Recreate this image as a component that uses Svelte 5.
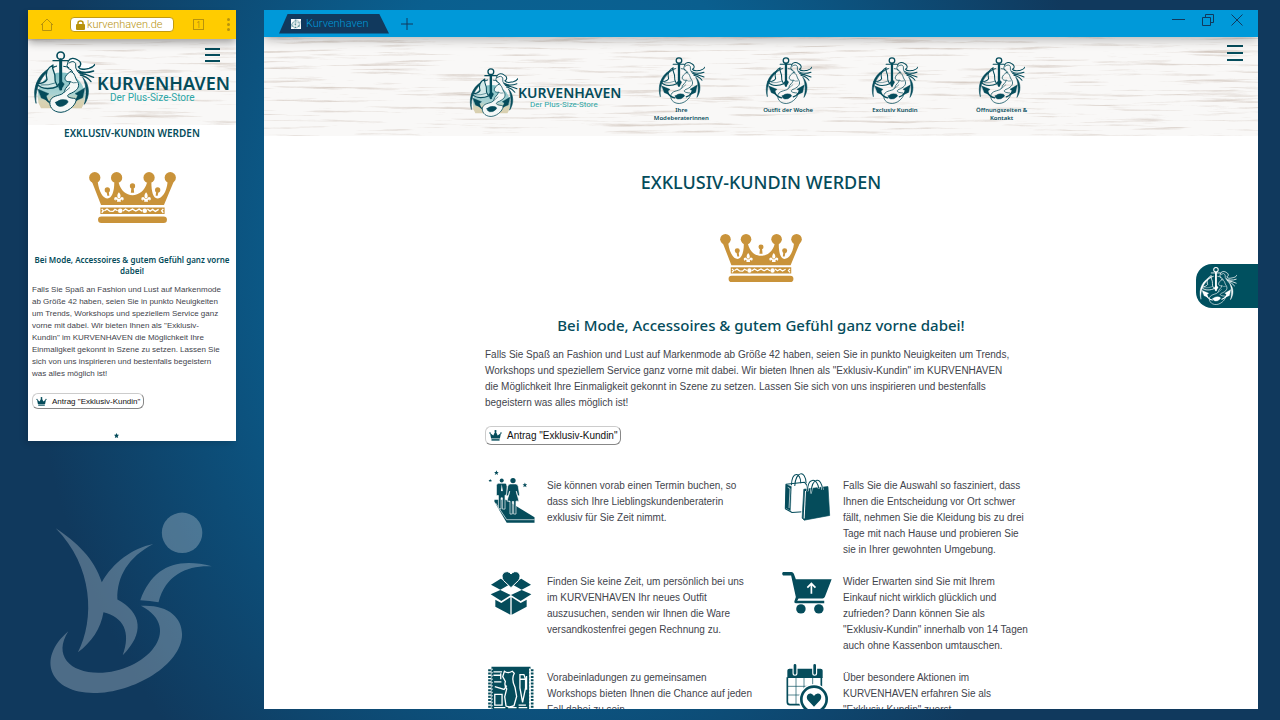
<script>
  const intro =
    'Falls Sie Spaß an Fashion und Lust auf Markenmode ab Größe 42 haben, seien Sie in punkto Neuigkeiten um Trends, Workshops und speziellem Service ganz vorne mit dabei. Wir bieten Ihnen als "Exklusiv-Kundin" im KURVENHAVEN die Möglichkeit Ihre Einmaligkeit gekonnt in Szene zu setzen. Lassen Sie sich von uns inspirieren und bestenfalls begeistern was alles möglich ist!';

  const nav = ['Ihre Modeberaterinnen', 'Outfit der Woche', 'Exclusiv Kundin', 'Öffnungszeiten & Kontakt'];

  const features = [
    { icon: 'carpet', text: 'Sie können vorab einen Termin buchen, so dass sich Ihre Lieblingskundenberaterin exklusiv für Sie Zeit nimmt.' },
    { icon: 'bags', text: 'Falls Sie die Auswahl so fasziniert, dass Ihnen die Entscheidung vor Ort schwer fällt, nehmen Sie die Kleidung bis zu drei Tage mit nach Hause und probieren Sie sie in Ihrer gewohnten Umgebung.' },
    { icon: 'box', text: 'Finden Sie keine Zeit, um persönlich bei uns im KURVENHAVEN Ihr neues Outfit auszusuchen, senden wir Ihnen die Ware versandkostenfrei gegen Rechnung zu.' },
    { icon: 'cart', text: 'Wider Erwarten sind Sie mit Ihrem Einkauf nicht wirklich glücklich und zufrieden? Dann können Sie als "Exklusiv-Kundin" innerhalb von 14 Tagen auch ohne Kassenbon umtauschen.' },
    { icon: 'sewing', text: 'Vorabeinladungen zu gemeinsamen Workshops bieten Ihnen die Chance auf jeden Fall dabei zu sein.' },
    { icon: 'calendar', text: 'Über besondere Aktionen im KURVENHAVEN erfahren Sie als "Exklusiv-Kundin" zuerst.' }
  ];
</script>

{#snippet mermaid(id, colored)}
  <svg class="mermaid" viewBox="0 0 186 186" aria-hidden="true" fill="none" stroke="currentColor" stroke-linecap="round" stroke-linejoin="round">
    {#if colored}
      <defs>
        <linearGradient id={id} x1="0" y1="0" x2="0" y2="1">
          <stop offset="0" stop-color="#7fbfc4" />
          <stop offset="0.6" stop-color="#a9d3d3" />
          <stop offset="0.8" stop-color="#d8d3b4" />
          <stop offset="1" stop-color="#d9cfae" />
        </linearGradient>
      </defs>
      <path d="M24 172a71 71 0 1 1 122 0z" fill="url(#{id})" stroke="none" />
    {/if}
    <path d="M9 156C-6 108 20 54 72 45C32 60 4 106 9 156Z" fill="currentColor" stroke-width="2" />
    <path d="M150 80C172 102 170 138 154 160C161 136 162 106 150 80Z" fill="currentColor" stroke-width="2" />
    <path d="M92 46q12 1 16 4" stroke-width="3" />
    <!-- anchor -->
    <circle cx="83" cy="14" r="11" stroke-width="5" />
    <path d="M60 29h44" stroke-width="4" />
    <path d="M83 26v88" stroke-width="9" />
    <path d="M28 128C40 150 56 160 66 162" stroke-width="5" />
    <path d="M144 126C136 144 124 154 112 158" stroke-width="5" />
    <path d="M14 114l34 14-8 7 5 14-20-8z" fill="currentColor" stroke-width="1" />
    <path d="M156 110l-30 18 8 5-7 17 22-10z" fill="currentColor" stroke-width="1" />
    <!-- tail fin -->
    <path d="M74 106C62 112 26 120 12 98C28 98 38 92 42 86C36 66 44 50 60 42C54 56 68 62 66 82C64 92 70 98 74 106Z" fill={colored ? '#d3e9e8' : 'none'} stroke-width="4" />
    <path d="M24 102q22 2 42-6" stroke-width="2" />
    <path d="M74 100l12-9 8 8-5 10-11 2z" fill="currentColor" stroke-width="1" />
    <!-- body and tail -->
    <path d="M112 62C128 64 124 80 134 92C142 108 132 118 116 126C98 132 100 140 122 142C142 140 118 182 84 184C58 184 46 164 52 148C60 130 88 136 94 122C96 108 110 104 112 92C100 94 92 86 98 76C102 68 108 66 112 62Z" fill={colored ? '#f4f8f7' : 'none'} stroke-width="3" />
    <path d="M68 154q14-12 32-7q10 5 0 12q-10 9-22 7q-10-3-10-12z" fill="currentColor" stroke-width="2" />
    <path d="M112 92q8 6 18 3M94 124l16-14" stroke-width="2" />
    <!-- head and hair -->
    <path d="M106 30C112 20 124 20 134 27C148 34 144 46 136 48C144 60 156 54 168 52C178 50 184 44 186 40" fill={colored ? '#fff' : 'none'} stroke-width="4" />
    <path d="M106 30l-4 14q2 12 12 12l4 6M108 36q14-10 20 2q-2 14 6 24q10 12 24 8" stroke-width="3" />
    <path d="M134 58q18 12 48 2M138 65q26 6 44 14M142 72q20 4 32 20" stroke-width="4" />
  </svg>
{/snippet}

{#snippet crown()}
  <svg class="crown" viewBox="0 0 262 154" aria-hidden="true" fill="#c9933a">
    <circle cx="17" cy="17" r="17" /><circle cx="83" cy="17" r="17" /><circle cx="181" cy="17" r="17" /><circle cx="245" cy="17" r="17" />
    <path d="M8 28L36 100H226L256 28L237 30C234 62 219 80 206 80C194 80 188 60 188 32H175C168 58 150 70 131 70C112 70 96 58 89 32H76C76 60 68 80 56 80C42 80 30 60 26 30Z" />
    <circle cx="55" cy="54" r="8" /><path d="M52 56h7l2 16h-6z" />
    <circle cx="131" cy="42" r="8" /><path d="M128 44h6l2 19h-10z" />
    <circle cx="207" cy="54" r="8" /><path d="M203 56h7l-3 16h-6z" />
    {#each [90, 172] as x}
      <g transform="translate({x} 61)" fill="#fff">
        <path d="M0 0q8 9 3 18h-6q-5-9 3-18z" />
        <path d="M-3 20q-4-9-11-3q-2 7 4 9q-2-7 5-2l-1 5h12l-1-5q7-5 5 2q6-2 4-9q-7-6-11 3z" />
      </g>
    {/each}
    <path d="M34 107h194v20h-194z" />
    <g fill="none" stroke="#fff" stroke-width="4">
      <path d="M46 117l8-5 8 6 10 1 6-6 8 4M102 118l8-6 10 6 11-6 10 6 10-6 9 6M176 112l8 6 8-5 8 6 10-6" />
      <path d="M38 112l5 5-5 6M224 112l-5 5 5 6" />
    </g>
    <circle cx="94" cy="117" r="7" fill="#fff" /><circle cx="168" cy="117" r="7" fill="#fff" />
    <rect x="27" y="134" width="208" height="20" rx="10" />
  </svg>
{/snippet}

{#snippet smallCrown()}
  <svg class="small-crown" viewBox="0 0 34 30" aria-hidden="true" fill="currentColor">
    <path d="M5 23L2 8l9 7 6-13 6 13 9-7-3 15z" /><circle cx="2" cy="8" r="2" /><circle cx="32" cy="8" r="2" /><circle cx="17" cy="3" r="3" />
    <path d="M6 25h22v4H6z" />
  </svg>
{/snippet}

{#snippet wood(id, seed)}
  <svg class="wood" aria-hidden="true" width="100%" height="100%">
    <filter id={id} x="0" y="0" width="100%" height="100%">
      <feTurbulence type="fractalNoise" baseFrequency="0.012 0.3" numOctaves="6" seed={seed} />
      <feColorMatrix values="0 0 0 0 0.66  0 0 0 0 0.59  0 0 0 0 0.54  2.8 0 0 0 -1.56" />
    </filter>
    <rect width="100%" height="100%" filter="url(#{id})" />
  </svg>
{/snippet}

{#snippet burger()}
  <button class="burger" aria-label="Menü"><span></span><span></span><span></span></button>
{/snippet}

{#snippet featureIcon(name)}
  {#if name === 'carpet'}
    <svg viewBox="0 0 150 160" width="50" height="53" aria-hidden="true" fill="currentColor">
      <path d="M31 1l2 5h5l-4 4 2 5-5-3-5 3 2-5-4-4h5z" />
      <path d="M12 27l2 3h3l-2 3 1 3-4-2-3 2 1-3-3-3h4zM117 38l2 5h5l-4 4 2 5-5-3-5 3 2-5-4-4h5z" />
      <path d="M25 90h35l86 53v16H62L25 96z" />
      <g stroke="#fff" stroke-width="2">
        <path d="M28 99l34 51h84" fill="none" />
        <path d="M36 40h22q5 3 5 9v27h-6v42h-8V84h-4v33h-8V77h-6V47q1-6 5-7z" />
        <path d="M72 42h18q6 1 7 8l4 26-6 3-4-15 8 30h-9v39h-7V95h-4v38h-7V94h-9l8-30-4 15-6-3 4-26q1-7 7-8z" />
      </g>
      <circle cx="47" cy="32" r="6" /><circle cx="81" cy="32" r="8" />
      <path d="M47 43l-2 18 3 4 2-4z" fill="#fff" />
    </svg>
  {:else if name === 'bags'}
    <svg viewBox="0 0 140 142" width="47" height="48" aria-hidden="true" fill="none" stroke="currentColor" stroke-width="3" stroke-linejoin="round">
      <path d="M6 33l55-6 8 10-2 77-43 3-20-11z" fill="#fff" />
      <path d="M6 33l16 7-3 72-15-9z" fill="currentColor" stroke-width="1" /><path d="M11 42l7 4-3 58" stroke="#fff" stroke-width="2" />
      <path d="M22 36C24-7 50-4 50 30M32 38C34-5 64-12 66 30" />
      <path d="M59 48l72-8 5 86-76 14-6-6z" fill="currentColor" stroke="#fff" stroke-width="7" />
      <path d="M59 48l72-8 5 86-76 14-6-6z" fill="currentColor" stroke-width="2" />
      <path d="M64 53l-4 82" stroke="#fff" stroke-width="3" />
      <path d="M70 54C70 14 96 10 104 46M80 60C84 9 112 10 115 50" stroke="#fff" stroke-width="6" />
      <path d="M70 54C70 14 96 10 104 46M80 60C84 9 112 10 115 50" />
    </svg>
  {:else if name === 'box'}
    <svg viewBox="0 0 124 132" width="42" height="44" aria-hidden="true" fill="currentColor">
      <path d="M31 23L2 41l28 15 32-18zM93 23l29 18-28 15-32-18zM30 57L1 70l32 20 28-18zM94 57l29 13-32 20-29-18z" />
      <path d="M15 86l18 10 27-17v52L15 107zM109 86L91 96 64 79v52l45-24z" />
      <path d="M62 50L39 28C30 14 38 1 52 2Q59 4 62 9Q66 4 73 2C87 1 94 14 85 28Z" stroke="#fff" stroke-width="3" />
    </svg>
  {:else if name === 'cart'}
    <svg viewBox="0 0 148 124" width="50" height="42" aria-hidden="true" fill="currentColor">
      <path d="M3 0h25q5 0 7 5l6 16h106l-20 52q-2 5-7 5H49l-4 7h80v7H42q-7 0-5-6l4-12L27 10H3q-5-5 0-10z" />
      <circle cx="56" cy="109" r="14" /><circle cx="109" cy="109" r="14" />
      <path d="M87 64V35M75 46l12-12 12 12" fill="none" stroke="#fff" stroke-width="5" />
    </svg>
  {:else if name === 'sewing'}
    <svg viewBox="0 0 138 136" width="46" height="45" aria-hidden="true" fill="currentColor">
      <path d="M10 2h118v6H10zM10 2h114v132H10z" />
      <path d="M4 10v122M133 10v122" stroke="currentColor" stroke-width="8" stroke-dasharray="6 4" />
      <path d="M12 8v124M125 8v124" stroke="#fff" stroke-width="3" stroke-dasharray="4 6" />
      <g fill="none" stroke="#fff" stroke-width="4">
        <path d="M49 16q10 8 24 0l6 6q-10 18 2 42l5 28-8 28q-13 7-24 1l-4-28 6-24q-8-10-4-22l-8-15zM16 18h26M16 28h20M38 22v18M18 48h22M20 62l28 9 8-12M20 86h22v32H20zM18 126h34M60 126h26M92 118h22M92 126h26" />
        <path d="M96 26h12l5 14v26l-9 44-8-44zM96 40h17M116 30v42" />
      </g>
    </svg>
  {:else}
    <svg viewBox="0 0 130 150" width="44" height="50" aria-hidden="true" fill="currentColor">
      <path d="M12 14h94q6 0 6 6v22H6V20q0-6 6-6z" />
      <g fill="none" stroke="currentColor" stroke-width="5">
        <path d="M6 40v74q0 8 8 8h84q10 0 10-8V40" />
        <path d="M32 42v78M56 42v78M82 42v78M8 67h100M8 93h100" stroke-width="2" />
      </g>
      <path d="M29 5v23M88 5v23" stroke="#fff" stroke-width="15" stroke-linecap="round" />
      <path d="M29 4v24M88 4v24" stroke="currentColor" stroke-width="8" stroke-linecap="round" />
      <circle cx="86" cy="106" r="46" fill="#fff" />
      <circle cx="86" cy="106" r="38" fill="#fff" stroke="currentColor" stroke-width="8" />
      <path d="M86 128L67 108C60 96 69 86 78 89Q84 91 86 96Q89 90 95 89C105 86 112 96 105 108Z" />
    </svg>
  {/if}
{/snippet}

<div class="stage">
  <div class="side">
    <section class="phone">
      <div class="phone-bar">
        <button class="chrome" aria-label="Startseite">
          <svg viewBox="0 0 14 14" width="14" height="14" fill="none" stroke="currentColor"><path d="M1 7L7 1l6 6M2.500 6v6.500h9V6" /></svg>
        </button>
        <label class="url">
          <svg viewBox="0 0 9 10" width="9" height="10" aria-hidden="true"><rect y="4" width="9" height="6" rx="1" fill="currentColor" /><path d="M2 5V3q0-2 2.500-2T7 3v2" fill="none" stroke="currentColor" stroke-width="1.500" /></svg>
          <input type="text" value="kurvenhaven.de" aria-label="Adresse" />
        </label>
        <button class="chrome tabs" aria-label="Tabs">1</button>
        <button class="chrome dots" aria-label="Mehr"><span></span><span></span><span></span></button>
      </div>
      <header class="phone-head">
        {@render wood('wood-s', 4)}
        {@render mermaid('sea-s', true)}
        <div class="phone-brand">
          {@render burger()}
          <span class="name">KURVENHAVEN</span>
          <span class="claim">Der Plus-Size-Store</span>
        </div>
      </header>
      <main class="phone-main">
        <h1>EXKLUSIV-KUNDIN WERDEN</h1>
        {@render crown()}
        <h2>Bei Mode, Accessoires &amp; gutem Gefühl ganz vorne dabei!</h2>
        <p>{intro}</p>
        <button class="apply">{@render smallCrown()}Antrag "Exklusiv-Kundin"</button>
        <svg class="spark" viewBox="0 0 6 6" width="5" height="5" aria-hidden="true"><path d="M3 0l1 2h2L4.500 4 5 6 3 5 1 6l.5-2L0 2h2z" fill="currentColor" /></svg>
      </main>
    </section>
    <svg class="figure" viewBox="0 0 600 630" aria-hidden="true" fill="#fff" fill-opacity="0.26">
      <circle cx="457" cy="99" r="61" />
      <path d="M76 85C138 126 193 176 215 248C250 188 306 146 370 133C296 172 260 230 262 300C337 340 344 402 278 468C304 398 280 352 220 338C212 388 184 428 143 459C194 360 190 200 76 85Z" />
      <path d="M331 302C368 202 440 172 547 200C478 196 408 222 386 308Q360 303 331 302Z" />
      <path d="M333 319C412 314 457 352 457 406C455 496 312 582 190 582C62 582 14 482 114 396C68 468 118 521 205 521C346 521 466 388 333 319Z" />
    </svg>
  </div>

  <section class="window">
    <div class="title-bar">
      <div class="tab"><span class="favicon">{@render mermaid('sea-f', false)}</span>Kurvenhaven</div>
      <button class="chrome" aria-label="Neuer Tab"><svg viewBox="0 0 12 12" width="12" height="12" stroke="currentColor"><path d="M6 0v12M0 6h12" /></svg></button>
      <div class="controls">
        <button class="chrome" aria-label="Minimieren"><svg viewBox="0 0 13 12" width="13" height="12" stroke="currentColor"><path d="M0 5.500h13" /></svg></button>
        <button class="chrome" aria-label="Verkleinern"><svg viewBox="0 0 12 12" width="12" height="12" fill="none" stroke="currentColor"><path d="M.5 3.500h8v8h-8zM3.500 3V.5h8v8H9" /></svg></button>
        <button class="chrome" aria-label="Schließen"><svg viewBox="0 0 12 12" width="12" height="12" stroke="currentColor"><path d="M.5.5l11 11M11.500.5l-11 11" /></svg></button>
      </div>
    </div>
    <header class="head">
      {@render wood('wood-l', 11)}
      <div class="head-inner">
        <div class="brand">
          {@render mermaid('sea-l', true)}
          <div class="brand-text">
            <span class="name">KURVENHAVEN</span>
            <span class="claim">Der Plus-Size-Store</span>
          </div>
        </div>
        <nav>
          {#each nav as label, i}
            <a href="#seite-{i}">{@render mermaid('nav' + i, false)}<span>{label}</span></a>
          {/each}
        </nav>
      </div>
      {@render burger()}
    </header>
    <main class="main">
      <h1>EXKLUSIV-KUNDIN WERDEN</h1>
      {@render crown()}
      <h2>Bei Mode, Accessoires &amp; gutem Gefühl ganz vorne dabei!</h2>
      <p class="intro">{intro}</p>
      <button class="apply">{@render smallCrown()}Antrag "Exklusiv-Kundin"</button>
      <div class="features">
        {#each features as f}
          <div class="feature">
            <div class="pic">{@render featureIcon(f.icon)}</div>
            <p>{f.text}</p>
          </div>
        {/each}
      </div>
    </main>
    <button class="side-tab" aria-label="Menü öffnen">{@render mermaid('tab', false)}</button>
  </section>
</div>

<style>
  :global(body) { background: #10395d; }
  .stage {
    --teal: #054c5b;
    box-sizing: border-box;
    height: 100vh;
    min-height: 560px;
    overflow: hidden;
    display: grid;
    grid-template-columns: 208px minmax(0, 1fr);
    gap: 28px;
    padding: 10px 22px 11px 28px;
    color: #3f444c;
    font-family: "Liberation Sans", Arial, sans-serif;
    background: radial-gradient(ellipse 42% 96% at 44% 36%, #0a6698 0%, #0a5f8f 45%, #10395d 100%) #10395d;
  }
  button { font: inherit; color: inherit; padding: 0; border: 0; background: none; }
  svg { display: block; flex: none; }
  h1, h2, p { margin: 0; }
  h1, h2 { font-family: "Noto Sans", "Open Sans", sans-serif; font-weight: 500; color: var(--teal); text-align: center; }

  .side { display: flex; flex-direction: column; min-height: 0; }
  .figure { width: 200px; height: 209px; margin: 59px 0 0 2px; }

  .phone { flex: 1; min-height: 0; overflow: hidden; background: #fff; display: flex; flex-direction: column; box-shadow: -3px 3px 6px rgba(0, 0, 0, 0.12); }
  .phone-bar {
    flex: none; height: 29px; display: flex; align-items: center;
    box-sizing: border-box; padding: 0 6px 0 12px; background: #fc0; color: #b8930c;
    box-shadow: 0 3px 10px rgba(0, 0, 0, 0.4); position: relative; z-index: 1;
  }
  .url {
    display: flex; align-items: center; gap: 2px; width: 104px; height: 15px; box-sizing: border-box; padding: 0 5px; margin: 0 19px 0 16px;
    border: 1px solid #c19b10; border-radius: 4px; background: #fff;
  }
  .url input { flex: 1; min-width: 0; padding: 0; border: 0; outline: 0; background: none; color: inherit; font: 300 11px/13px Roboto, sans-serif; }
  .tabs { width: 11px; height: 11px; box-sizing: border-box; border: 1px solid currentColor; font: 8px/9px "Noto Sans", sans-serif; }
  .dots { display: grid; gap: 2px; margin-left: auto; }
  .dots span { width: 3px; height: 3px; border-radius: 50%; background: currentColor; }

  .wood { position: absolute; inset: 0; z-index: -1; background: #f9f8f7; }
  .phone-head { position: relative; z-index: 0; flex: none; height: 86px; display: flex; align-items: flex-start; box-sizing: border-box; padding: 9px 5px 0 5px; }
  .phone-head .mermaid { width: 62px; height: 62px; margin-top: 3px; color: var(--teal); }
  .phone-brand { flex: 1; display: flex; flex-direction: column; align-items: flex-start; padding-left: 2px; }
  .phone-brand .burger { align-self: flex-end; margin-right: 11px; }
  .name, .claim { white-space: nowrap; display: block; }
  .name { font-family: "Noto Sans", sans-serif; font-weight: 600; color: var(--teal); }
  .claim { font-family: Roboto, sans-serif; color: #2ba5a5; }
  .phone-brand .name { font-size: 18px; line-height: 20px; margin-top: 11px; }
  .phone-brand .claim { font-size: 10px; line-height: 10px; margin-left: 13px; }

  .burger { display: grid; gap: 4px; width: 15px; }
  .burger span { height: 2px; background: var(--teal); }

  .phone-main { display: flex; flex-direction: column; align-items: flex-start; padding: 0 4px; }
  .phone-main h1, .phone-main h2 { font-weight: 600; }
  .phone-main h1 { align-self: stretch; font-size: 10px; line-height: 16px; }
  .phone-main .crown { align-self: center; width: 87px; height: 51px; margin: 31px 0; }
  .phone-main h2 { align-self: stretch; font-size: 8px; line-height: 11px; }
  .phone-main p { max-width: 194px; font-size: 8px; line-height: 12px; margin-top: 8px; }
  .spark { align-self: center; margin: 24px 32px 0 0; color: var(--teal); }

  .apply {
    display: flex; align-items: center; gap: 5px; box-sizing: border-box; background: #fff; color: #111; white-space: nowrap;
    border: 1px solid #ccc; border-right-color: #888; border-bottom-color: #888; border-radius: 6px;
  }
  .phone-main .apply { margin-top: 13px; height: 16px; padding: 0 3px; font-size: 8px; }
  .small-crown { width: 13px; height: 11px; color: var(--teal); }
  .phone-main .small-crown { width: 11px; height: 9px; }

  .window { position: relative; min-width: 0; min-height: 0; overflow: hidden; background: #fff; display: flex; flex-direction: column; }
  .title-bar {
    flex: none; height: 27px; display: flex; align-items: center; box-sizing: border-box; padding: 0 15px;
    position: relative; z-index: 1; background: #0099d9; color: #11395d; box-shadow: 0 2px 12px rgba(0, 0, 0, 0.3);
  }
  .tab {
    display: flex; align-items: center; gap: 5px; width: 110px; height: 20px; box-sizing: border-box; padding-left: 12px; margin-right: 12px;
    background: #11395d; color: #0099d9; clip-path: polygon(8% 0, 91% 0, 100% 100%, 0 100%);
    font: 300 11px/20px Roboto, sans-serif;
  }
  .favicon { background: #fff; color: #3d7f88; }
  .favicon .mermaid { width: 10px; height: 10px; }
  .controls { display: flex; gap: 17px; margin-left: auto; margin-bottom: 7px; }

  .head { position: relative; z-index: 0; flex: none; height: 99px; display: grid; grid-template-columns: 1fr minmax(0, 588px) 1fr; }
  .head-inner { grid-column: 2; display: grid; grid-template-columns: 159px 1fr; align-items: start; padding: 20px 0 0 2px; }
  .head .burger { justify-self: end; align-self: start; margin: 8px 15px 0 0; gap: 5px; width: 16px; }
  .brand { display: flex; margin-top: 11px; }
  .brand .mermaid { width: 49px; height: 49px; color: var(--teal); }
  .brand-text { margin-top: 17px; }
  .brand-text .name { font-size: 14px; line-height: 16px; }
  .brand-text .claim { font-size: 8px; line-height: 8px; margin-left: 12px; }
  nav { display: grid; grid-template-columns: repeat(4, 1fr); }
  nav a { display: flex; flex-direction: column; align-items: center; color: var(--teal); text-decoration: none; text-align: center; font: 600 6px/8px "Noto Sans", sans-serif; }
  nav .mermaid { width: 47px; height: 47px; margin-bottom: 2px; }
  nav span { max-width: 56px; }

  .main { box-sizing: border-box; width: 100%; max-width: 552px; margin: 0 auto; display: flex; flex-direction: column; align-items: flex-start; font-size: 10px; line-height: 16px; }
  .main h1 { align-self: stretch; font-size: 18px; line-height: 24px; margin-top: 34px; }
  .main .crown { align-self: center; width: 82px; height: 48px; margin: 40px 0 31px; }
  .main h2 { align-self: stretch; font-size: 15px; line-height: 24px; margin-bottom: 10px; }
  .intro { max-width: 532px; }
  .main .apply { height: 19px; margin: 15px 0 33px; padding: 0 3px; }
  .features { display: grid; grid-template-columns: 271fr 248fr; column-gap: 25px; row-gap: 16px; align-self: stretch; padding-right: 8px; }
  .feature { display: flex; align-items: flex-start; gap: 10px; }
  .pic { flex: none; width: 52px; height: 53px; display: flex; justify-content: center; align-items: center; margin-top: -8px; color: var(--teal); }

  .side-tab {
    position: absolute; right: 0; top: 254px; width: 62px; height: 44px; padding-left: 3px;
    border-radius: 16px 0 0 16px; background: #00505f; color: #fff;
  }
  .side-tab .mermaid { width: 38px; height: 38px; }
</style>
